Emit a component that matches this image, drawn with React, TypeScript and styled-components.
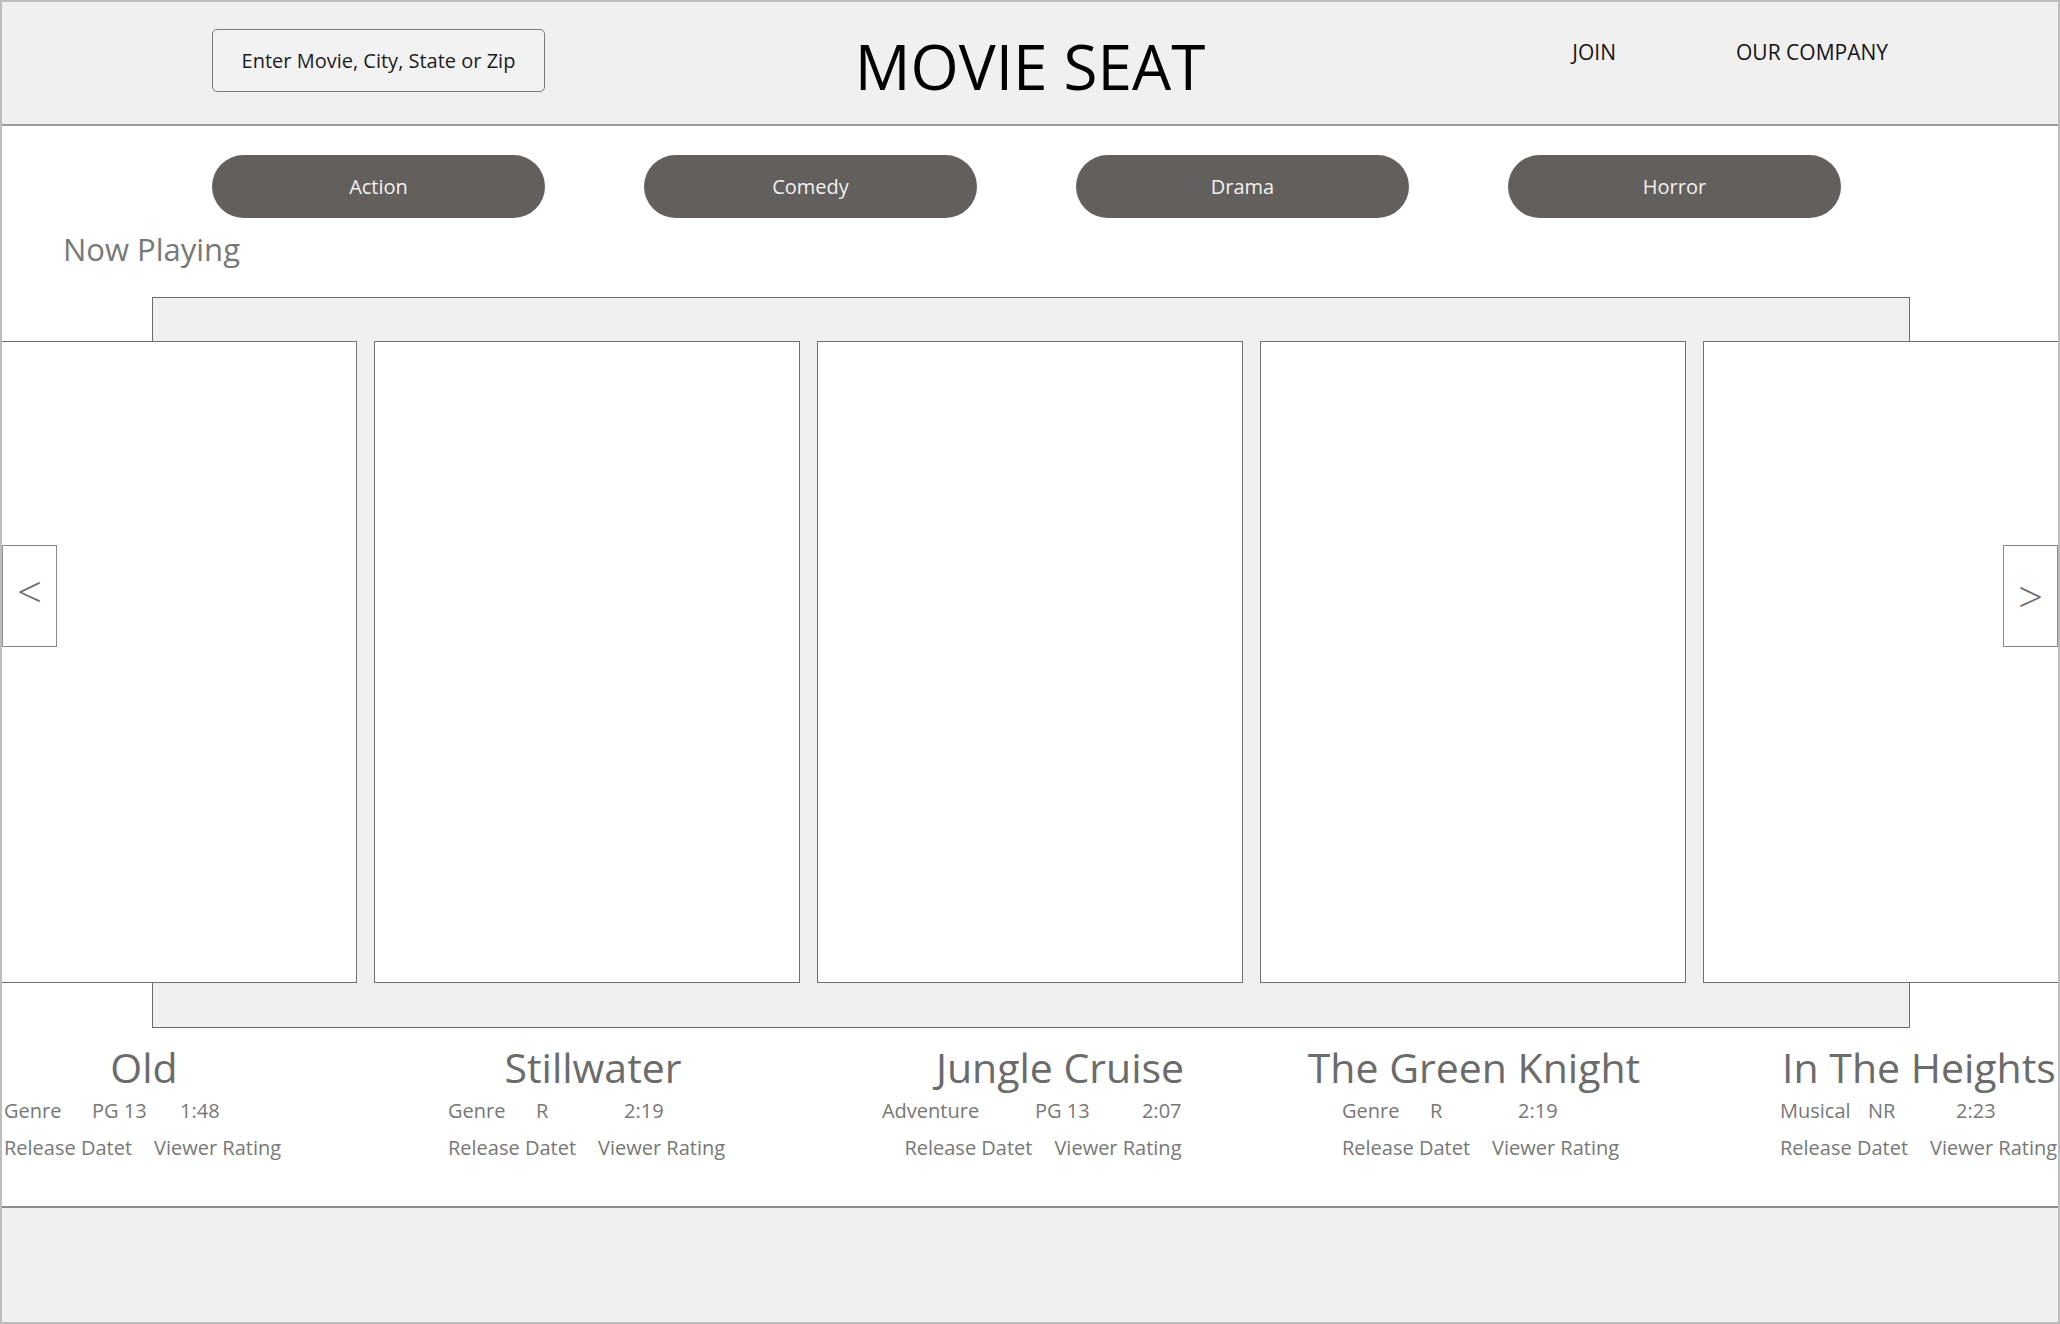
import styled, { createGlobalStyle } from "styled-components";

const GlobalStyle = createGlobalStyle`
  html, body {
    margin: 0;
    padding: 0;
    background: #ffffff;
  }
  body {
    font-family: "Open Sans", "Noto Sans", sans-serif;
  }
  * {
    box-sizing: border-box;
  }
`;

const Page = styled.div`
  width: 2060px;
  height: 1324px;
  border: 2px solid #bdbdbd;
  display: flex;
  flex-direction: column;
  overflow: hidden;
  background: #ffffff;
`;

const Header = styled.header`
  flex: 0 0 124px;
  background: #f0f0f0;
  border-bottom: 2px solid #9c9c9c;
  display: grid;
  grid-template-columns: 1fr auto 1fr;
  align-items: start;
`;

const SearchBox = styled.div`
  margin: 27px 0 0 210px;
  width: 333px;
  height: 63px;
  border: 1px solid #7a7a7a;
  border-radius: 5px;
  background: #f2f2f2;
  display: flex;
  align-items: center;
  justify-content: center;
  font-size: 20px;
  color: #1c1c1c;
`;

const Logo = styled.h1`
  margin: 33px 0 0;
  font-size: 62px;
  line-height: 1;
  font-weight: 400;
  color: #000000;
`;

const Nav = styled.nav`
  justify-self: end;
  display: flex;
  gap: 120px;
  margin-top: 40px;
  padding-right: 170px;
  font-size: 21px;
  line-height: 1;
  color: #141414;
`;

const Main = styled.main`
  flex: 1;
  display: flex;
  flex-direction: column;
`;

const GenreRow = styled.div`
  display: flex;
  gap: 99px;
  margin-top: 29px;
  padding-left: 210px;
`;

const GenreButton = styled.button`
  width: 333px;
  height: 63px;
  border: none;
  border-radius: 32px;
  background: #625f5d;
  color: #f2f2f2;
  font-family: inherit;
  font-size: 20px;
  display: flex;
  align-items: center;
  justify-content: center;
`;

const SectionTitle = styled.h2`
  margin: 16px 0 0 61px;
  font-size: 31px;
  line-height: 1;
  font-weight: 400;
  color: #787878;
`;

const Carousel = styled.section`
  position: relative;
  margin-top: 32px;
`;

const Backdrop = styled.div`
  margin: 0 148px 0 150px;
  height: 731px;
  padding-top: 43px;
  background: #f0f0f0;
  border: 1px solid #6c6c6c;
`;

const Track = styled.div`
  display: flex;
  justify-content: center;
  gap: 17px;
  margin: 0 -149px 0 -151px;
`;

const Poster = styled.div`
  flex: 0 0 426px;
  height: 642px;
  background: #ffffff;
  border: 1px solid #707070;
`;

const Arrow = styled.button<{ $side: "left" | "right" }>`
  position: absolute;
  top: 248px;
  ${(p) => (p.$side === "left" ? "left: 0;" : "right: 0;")}
  width: 55px;
  height: 102px;
  padding: 0 0 ${(p) => (p.$side === "left" ? "10px" : "0")};
  background: #ffffff;
  border: 1px solid #8a8a8a;
  display: flex;
  align-items: center;
  justify-content: center;
  font-family: inherit;
  font-size: 44px;
  font-weight: 300;
  line-height: 1;
  color: #6e6e6e;
`;

const InfoRow = styled.div`
  display: flex;
  justify-content: center;
  gap: 17px;
  margin-top: 19px;
`;

const InfoBlock = styled.div`
  flex: 0 0 426px;
  display: flex;
  flex-direction: column;
  align-items: center;
`;

const MovieTitle = styled.h3<{ $nudge: number }>`
  margin: 0 0 0 ${(p) => p.$nudge * 2}px;
  font-size: 41px;
  line-height: 1;
  font-weight: 400;
  color: #6b6b6b;
  white-space: nowrap;
`;

const Details = styled.div<{ $width: number; $shift: number; $align: string }>`
  width: ${(p) => p.$width}px;
  margin: 4px 0 0 ${(p) => p.$shift * 2}px;
  display: flex;
  flex-direction: column;
  align-items: ${(p) => p.$align};
  font-size: 20px;
  line-height: 37px;
  color: #777777;
  white-space: nowrap;
`;

const SpecLine = styled.div<{ $cols: string }>`
  display: grid;
  grid-template-columns: ${(p) => p.$cols};
`;

const MetaLine = styled.div`
  display: flex;
  gap: 22px;
`;

const Footer = styled.footer`
  flex: 0 0 116px;
  background: #f0f0f0;
  border-top: 2px solid #8c8c8c;
`;

const genres = ["Action", "Comedy", "Drama", "Horror"];

const movies = [
  { title: "Old", spec: ["Genre", "PG 13", "1:48"], nudge: 0, shift: 0, align: "flex-start", width: 280, cols: "88px 88px auto" },
  { title: "Stillwater", spec: ["Genre", "R", "2:19"], nudge: 6, shift: 1, align: "flex-start", width: 280, cols: "88px 88px auto" },
  { title: "Jungle Cruise", spec: ["Adventure", "PG 13", "2:07"], nudge: 30, shift: 0, align: "flex-end", width: 303, cols: "153px 107px auto" },
  { title: "The Green Knight", spec: ["Genre", "R", "2:19"], nudge: 1, shift: 9, align: "flex-start", width: 280, cols: "88px 88px auto" },
  { title: "In The Heights", spec: ["Musical", "NR", "2:23"], nudge: 3, shift: 4, align: "flex-start", width: 280, cols: "88px 88px auto" },
];

export default function App() {
  return (
    <>
      <GlobalStyle />
      <Page>
        <Header>
          <SearchBox>Enter Movie, City, State or Zip</SearchBox>
          <Logo>MOVIE SEAT</Logo>
          <Nav>
            <span>JOIN</span>
            <span>OUR COMPANY</span>
          </Nav>
        </Header>
        <Main>
          <GenreRow>
            {genres.map((g) => (
              <GenreButton key={g}>{g}</GenreButton>
            ))}
          </GenreRow>
          <SectionTitle>Now Playing</SectionTitle>
          <Carousel>
            <Backdrop>
              <Track>
                {movies.map((m) => (
                  <Poster key={m.title} />
                ))}
              </Track>
            </Backdrop>
            <Arrow $side="left">&lt;</Arrow>
            <Arrow $side="right">&gt;</Arrow>
          </Carousel>
          <InfoRow>
            {movies.map((m) => (
              <InfoBlock key={m.title}>
                <MovieTitle $nudge={m.nudge}>{m.title}</MovieTitle>
                <Details $width={m.width} $shift={m.shift} $align={m.align}>
                  <SpecLine $cols={m.cols}>
                    {m.spec.map((s) => (
                      <span key={s}>{s}</span>
                    ))}
                  </SpecLine>
                  <MetaLine>
                    <span>Release Datet</span>
                    <span>Viewer Rating</span>
                  </MetaLine>
                </Details>
              </InfoBlock>
            ))}
          </InfoRow>
        </Main>
        <Footer />
      </Page>
    </>
  );
}
